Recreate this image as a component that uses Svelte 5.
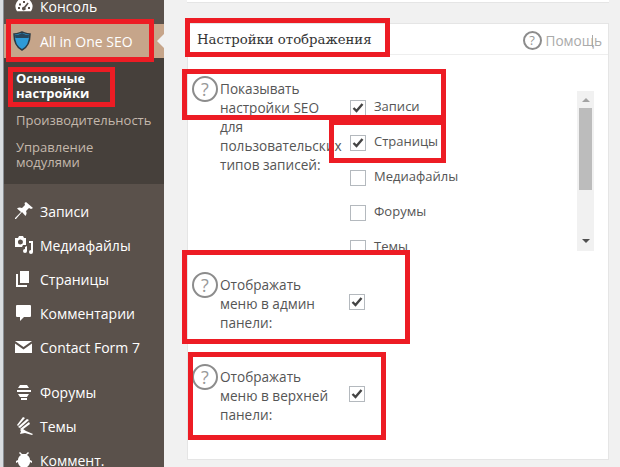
<script lang="ts">
  const menuTop = [
    { label: 'Записи', icon: 'pin' },
    { label: 'Медиафайлы', icon: 'media' },
    { label: 'Страницы', icon: 'pages' },
    { label: 'Комментарии', icon: 'comment' },
    { label: 'Contact Form 7', icon: 'mail' }
  ];
  const menuBottom = [
    { label: 'Форумы', icon: 'forum' },
    { label: 'Темы', icon: 'brush' },
    { label: 'Коммент.', icon: 'bug' }
  ];
  const postTypes = [
    { label: 'Записи', checked: true },
    { label: 'Страницы', checked: true },
    { label: 'Медиафайлы', checked: false },
    { label: 'Форумы', checked: false },
    { label: 'Темы', checked: false }
  ];
  const frames = [
    { name: 'seo', x: 6, y: 19, w: 148, h: 43 },
    { name: 'basic', x: 8, y: 67, w: 107, h: 40 },
    { name: 'title', x: 185, y: 18, w: 205, h: 39 },
    { name: 'show', x: 182, y: 69, w: 264, h: 51 },
    { name: 'pages', x: 329, y: 120, w: 117, h: 43 },
    { name: 'admin', x: 182, y: 250, w: 228, h: 94 },
    { name: 'top', x: 188, y: 352, w: 198, h: 88 }
  ];
</script>

{#snippet icon(name)}
  <svg class="icon" width="20" height="20" viewBox="0 0 20 20" fill="currentColor">
    {#if name === 'gauge'}
      <path fill-rule="evenodd" d="M10 2a8.500 8.500 0 0 0-7 13.300h14A8.500 8.500 0 0 0 10 2zM9 5h2v2H9zM5 7.500h2v2H5zM13.500 6.500l1.200 1-3.300 4.300a1.800 1.800 0 1 1-1.400-1zM4 11h2v2H4zm10 0h2v2h-2z"/>
    {:else if name === 'pin'}
      <path d="M12 1l7 6-2 1-2-1-3 3c1 2 .5 3.500-.5 5L8 11l-6 7-1 0 0-1 6-6-4-3.500c1.500-1 3-1.500 5-.5l3-3-.5-2z"/>
    {:else if name === 'media'}
      <path fill-rule="evenodd" d="M1 3h3l1-2h4l1 2h2v7H9l-1 2H1zM6.500 4.500a2.500 2.500 0 1 0 0 5 2.500 2.500 0 0 0 0-5z"/>
      <path d="M15 6h4v11a2 2 0 1 1-2-2V8h-2zM13 11v5a2 2 0 1 1-2-2v-2z"/>
    {:else if name === 'pages'}
      <path d="M6 2h9v12H6z"/>
      <path d="M2 5h2v11h9v2H2z"/>
    {:else if name === 'comment'}
      <path d="M3 2h13a1 1 0 0 1 1 1v10a1 1 0 0 1-1 1h-6l-4 4v-4H3a1 1 0 0 1-1-1V3a1 1 0 0 1 1-1z"/>
    {:else if name === 'mail'}
      <path d="M1 4h17L9.500 10zM1 6.500l8.500 6 8.500-6V16H1z"/>
    {:else if name === 'forum'}
      <path d="M6 3h7l2 3H4zM3 8h14v2H3zM4 12h11l-2 3H6zM7 16h6v2H7z"/>
    {:else if name === 'brush'}
      <path d="M9 1l2 1-7 8-1-1zM13 3l2 1-9 8-2-1zM15 6l1 2-8 6-2-1zM6 14l3-1 3 2 7 3-1 1-7-2-5 1 1-3z"/>
    {:else}
      <path d="M6 2l2 2h4l2-2 1 1-2 2c2 1 3 3 3 5l2 1v2l-2-1c0 3-3 6-6 6s-6-3-6-6l-2 1v-2l2-1c0-2 1-4 3-5L5 3z"/>
    {/if}
  </svg>
{/snippet}

{#snippet help(cls)}
  <span class="help {cls}">?</span>
{/snippet}

{#snippet check(on)}
  <span class="box">
    {#if on}
      <svg width="14" height="14" viewBox="0 0 14 14"><path d="M2.500 7l3 3 6-7" fill="none" stroke="#444" stroke-width="2.400"/></svg>
    {/if}
  </span>
{/snippet}

<div class="page">
  <div class="edge"></div>

  <nav class="sidebar">
    <div class="item first">{@render icon('gauge')}<span>Консоль</span></div>
    <div class="item current">
      <svg class="shield" width="18" height="20" viewBox="0 0 18 20">
        <path d="M1 3c3 0 5-1 8-2 3 1 5 2 8 2 0 7-2 13-8 16C3 16 1 10 1 3z" fill="#2f9bd8" stroke="#2c3a44" stroke-width="1.500"/>
        <path d="M2 4c3 0 5-1 7-2 2 1 4 2 7 2l-.3 3H2.300z" fill="#27465c"/>
      </svg>
      <span>All in One SEO</span>
      <i class="arrow"></i>
    </div>
    <div class="submenu">
      <a class="on" href="#a">Основные настройки</a>
      <a href="#b">Производительность</a>
      <a href="#c">Управление модулями</a>
    </div>

    <div class="group">
      {#each menuTop as m}
        <div class="item">{@render icon(m.icon)}<span>{m.label}</span></div>
      {/each}
    </div>
    <div class="group second">
      {#each menuBottom as m}
        <div class="item">{@render icon(m.icon)}<span>{m.label}</span></div>
      {/each}
    </div>
  </nav>

  <main class="main">
    <div class="stub"></div>
    <section class="card">
      <header class="card-head">
        <h3>Настройки отображения</h3>
        <div class="head-help">
          {@render help('small')}
          <span class="help-text">Помощь</span>
          <span class="toggle"></span>
        </div>
      </header>

      <div class="row first-row">
        {@render help('')}
        <div class="label">Показывать настройки SEO для пользовательских типов записей:</div>
        <div class="types">
          <div class="types-list">
            {#each postTypes as t}
              <div class="type">{@render check(t.checked)}<span>{t.label}</span></div>
            {/each}
          </div>
          <div class="scroll">
            <i class="up"></i>
            <div class="thumb"></div>
            <i class="down"></i>
          </div>
        </div>
      </div>

      <div class="row admin-row">
        {@render help('')}
        <div class="label">Отображать меню в админ панели:</div>
        <div class="single">{@render check(true)}</div>
      </div>

      <div class="row top-row">
        {@render help('')}
        <div class="label">Отображать меню в верхней панели:</div>
        <div class="single">{@render check(true)}</div>
      </div>
    </section>
  </main>

  {#each frames as f}
    <div class="frame" style="left:{f.x}px;top:{f.y}px;width:{f.w}px;height:{f.h}px"></div>
  {/each}
</div>

<style>
  :global(body) {
    margin: 0;
    background: #f1f1f1;
  }

  .page {
    position: relative;
    display: flex;
    width: 620px;
    height: 467px;
    overflow: hidden;
    font-family: "Open Sans", sans-serif;
    font-size: 13px;
    color: #555;
  }

  .edge {
    width: 3px;
    flex: none;
    background: #d9dde0;
    border-right: 1px solid #8a8f94;
  }

  .sidebar {
    width: 160px;
    flex: none;
    background: #5a514b;
    color: #fff;
    font-size: 14px;
  }

  .item {
    position: relative;
    display: flex;
    align-items: center;
    height: 34px;
    gap: 6px;
    padding-left: 10px;
  }

  .item.first {
    height: 24px;
    margin-top: -6px;
  }

  .icon {
    width: 20px;
    height: 20px;
    flex: none;
  }

  .item.current {
    height: 34px;
    margin-top: 6px;
    background: #c6a58a;
    gap: 9px;
    padding-left: 9px;
  }

  .arrow {
    position: absolute;
    right: 0;
    top: 10px;
    border: 7px solid transparent;
    border-right-color: #f1f1f1;
    border-left-width: 0;
  }

  .submenu {
    display: flex;
    flex-direction: column;
    background: #46403b;
    height: 126px;
    box-sizing: border-box;
    padding: 13px 8px 0 12px;
    font-size: 13px;
    line-height: 15px;
    gap: 12px;
  }

  .submenu a {
    color: #c4b8ac;
    text-decoration: none;
  }

  .submenu a.on {
    color: #fff;
    font-weight: 700;
    width: 90px;
  }

  .submenu a:last-child {
    width: 100px;
  }

  .group {
    margin-top: 10px;
  }

  .group.second {
    margin-top: 11px;
  }

  .main {
    width: 422px;
    margin-left: 23px;
    flex: none;
  }

  .stub {
    height: 2px;
    background: #fff;
    border-bottom: 1px solid #e5e5e5;
  }

  .card {
    position: relative;
    height: 437px;
    margin-top: 20px;
    background: #fff;
    border: 1px solid #e5e5e5;
    box-sizing: border-box;
  }

  .card-head {
    display: flex;
    justify-content: space-between;
    align-items: center;
    height: 30px;
    padding: 0 6px 0 9px;
    border-bottom: 1px solid #eee;
  }

  h3 {
    margin: 0;
    font: 400 13.25px "DejaVu Serif", serif;
    color: #333;
  }

  .head-help {
    position: relative;
    display: flex;
    align-items: center;
    gap: 4px;
    margin-top: 2px;
  }

  .help-text {
    font-size: 13.6px;
    color: #aaa;
  }

  .toggle {
    position: absolute;
    right: 9px;
    top: 4px;
    width: 1px;
    height: 12px;
    background: #aaa;
  }

  .help {
    display: flex;
    align-items: center;
    justify-content: center;
    flex: none;
    box-sizing: border-box;
    width: 26px;
    height: 26px;
    border: 2px solid #8c8c8c;
    border-radius: 50%;
    font-size: 18px;
    color: #999;
  }

  .help.small {
    width: 19px;
    height: 19px;
    font-size: 13px;
  }

  .row {
    display: flex;
    padding-left: 4px;
  }

  .label {
    width: 122px;
    margin-left: 2px;
    padding-top: 3px;
    flex: none;
    font-size: 13.6px;
    line-height: 19px;
  }

  .first-row {
    margin-top: 21px;
  }

  .types {
    display: flex;
    justify-content: space-between;
    width: 244px;
    height: 160px;
    margin-left: 8px;
    margin-top: 15px;
    overflow: hidden;
  }

  .types-list {
    display: flex;
    flex-direction: column;
    gap: 14px;
    padding-top: 6px;
  }

  .type {
    display: flex;
    align-items: center;
    gap: 8px;
    font-size: 13px;
    line-height: 19px;
  }

  .type span:last-child {
    padding-bottom: 2px;
  }

  .box {
    display: flex;
    align-items: center;
    justify-content: center;
    box-sizing: border-box;
    width: 16px;
    height: 16px;
    flex: none;
    background: #fff;
    border: 1px solid #b4b9be;
  }

  .scroll {
    display: flex;
    flex-direction: column;
    align-items: center;
    width: 17px;
    background: #f1f1f1;
    position: relative;
  }

  .up, .down {
    position: absolute;
    border: 4px solid transparent;
    border-top-width: 0;
    border-bottom-color: #a3a3a3;
    top: 7px;
  }

  .down {
    top: auto;
    bottom: 8px;
    border-bottom-width: 0;
    border-top-width: 4px;
    border-top-color: #505050;
    border-bottom-color: transparent;
  }

  .thumb {
    width: 13px;
    height: 82px;
    margin-top: 17px;
    background: #bcbcbc;
  }

  .admin-row {
    margin-top: 21px;
  }

  .top-row {
    margin-top: 32px;
  }

  .single {
    margin-left: 7px;
    margin-top: 22px;
  }

  .frame {
    position: absolute;
    box-sizing: border-box;
    border: 5px solid #ed1c24;
  }
</style>
